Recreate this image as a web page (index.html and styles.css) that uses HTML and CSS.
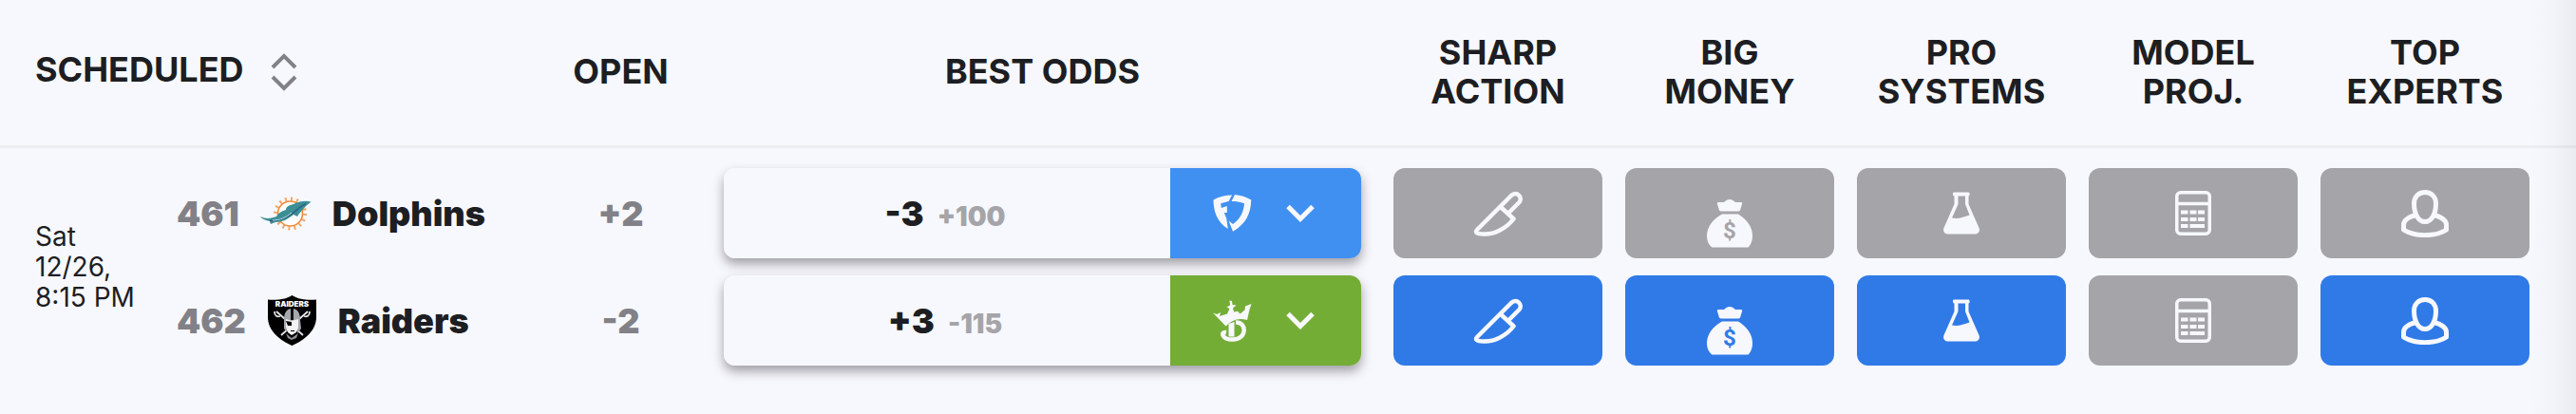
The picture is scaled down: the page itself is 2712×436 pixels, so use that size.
FILE: index.html
```html
<!DOCTYPE html>
<html lang="en">
<head>
    <meta charset="UTF-8">
    <meta name="viewport" content="width=device-width, initial-scale=1.0">
    <title>NFL Odds</title>
    <link rel="stylesheet" href="styles.css">
</head>
<body>

<!-- icon set -->
<svg class="sprite" aria-hidden="true">
    <symbol id="icon-knife" viewBox="0 0 52 48">
        <path d="M30 18 42.500 29.500C35 39.500 22 46 11 45.500 3 45.500 1.500 43.500 4.500 40.500L40 5C46-.5 52.500 7 48.500 12L36.500 24" fill="none" stroke="currentColor" stroke-width="4.500" stroke-linejoin="round"/>
    </symbol>
    <symbol id="icon-money" viewBox="0 0 48 72">
        <path d="M13 24h5c4-4 8-4 12 0h5c2 0 2.500.5 2 2l-2 6.500q-.5 1-2 1H15q-1.500 0-2-1L11 26c-.5-1.500 0-2 2-2z" fill="currentColor"/>
        <path d="M16 36.500h17C41 41 48 50 48 59c0 6-2 10-4.500 12.500h-38C2 69 0 65 0 59c0-9 7-18 16-22.500z" fill="currentColor"/>
        <text class="bag-sign" x="24" y="62" text-anchor="middle">$</text>
    </symbol>
    <symbol id="icon-flask" viewBox="0 0 38 45">
        <path fill="currentColor" fill-rule="evenodd" d="M11 .5h15.500c1.500 0 1.500 4 0 4V13L37.500 38c1.500 4-1 6.500-4 6.500h-29c-3 0-5.500-2.500-4-6.500L11.500 13V4.500c-2 0-2-4-.5-4zM15.500 4.500V13L9 27.500c7 1.500 12-1 18.500-3L23 13V4.500z"/>
    </symbol>
    <symbol id="icon-calc" viewBox="0 0 38 47">
        <g fill="none" stroke="currentColor" stroke-width="3.500">
            <rect x="1.750" y="1.750" width="34.500" height="43.500" rx="4"/>
            <path d="M2 13.500h34"/>
        </g>
        <path fill="currentColor" d="M6 20.500h7.500v4H6zm9.500 0h7v4h-7zm8.500 0h7v4h-7zM6 28h7.500v4H6zm9.500 0h7v4h-7zm8.500 0h7v4h-7zM6 35h7.500v4H6zm9.500 0H31v4H15.500z"/>
    </symbol>
    <symbol id="icon-user" viewBox="0 0 50 50">
        <g fill="none" stroke="currentColor" stroke-width="5" stroke-linejoin="round">
            <path d="M25 2.500c-7 0-11.500 5-11.500 12C13.500 25 18 33.500 25 33.500S36.500 25 36.500 14.500C36.500 7.500 32 2.500 25 2.500z"/>
            <path d="M15.500 26.500C8 28.500 2.500 32 2.500 37v5c11 7.500 34 7.500 45 0v-5c0-5-5.500-8.500-13-10.500"/>
        </g>
    </symbol>
    <symbol id="icon-chevron" viewBox="0 0 30 19">
        <path d="M2 2.500 15 15.500 28 2.500" fill="none" stroke="currentColor" stroke-width="5"/>
    </symbol>
    <symbol id="icon-sort" viewBox="0 0 28 40">
        <path d="M2 15 14 3l12 12M2 25l12 12 12-12" fill="none" stroke="currentColor" stroke-width="4"/>
    </symbol>
    <symbol id="logo-fanduel" viewBox="0 0 40 44">
        <g fill="currentColor" transform="translate(0 2)">
            <path d="M0 5.500Q9 .5 19.500.5L16 7 7.700 9.300 8.300 14l6-2V19h-3l2.400 6L15.300 36C4 29 0 18 0 5.500z"/>
            <path d="M22.500 0Q32 .8 39.700 5.500C39.500 20 34 31 20.500 38.700L16 27.500l4.500 3.500C28 26 32 18 32.500 9.300 28 7.500 24 7 19 7z"/>
        </g>
    </symbol>
    <symbol id="logo-draftkings" viewBox="0 0 41 44">
        <g fill="currentColor">
            <path d="M0 13.500 4 15l4-2-1 4 8-2.500 2.500-5.500-3-1.500 3.500-2L17.500.5l2.500.5.5 4 4 .5-3.500 3 1 4 4-.8 2.500 2.800 5-4 .5-4 6.500-2.500-2 6L36 21q-13-4-22.500 6.500z"/>
            <path d="M16.500 25l6-2v15.500h-6z"/>
        </g>
        <path d="M24 23.500C36 23 36 41.500 21 41.500 10 42 7 33 14 34" fill="none" stroke="currentColor" stroke-width="4.500"/>
    </symbol>
</svg>

<main class="odds-board">
    <table class="odds-table">
        <colgroup>
            <col class="col-date">
            <col class="col-team">
            <col class="col-open">
            <col class="col-odds">
            <col class="col-signal" span="4">
            <col class="col-signal-last">
        </colgroup>
        <thead>
            <tr>
                <th class="head-scheduled" colspan="2" scope="col">
                    <button class="sort-btn" type="button">SCHEDULED<svg class="icon-sort" aria-hidden="true"><use href="#icon-sort"/></svg></button>
                </th>
                <th scope="col">OPEN</th>
                <th scope="col">BEST ODDS</th>
                <th scope="col">SHARP<br>ACTION</th>
                <th scope="col">BIG<br>MONEY</th>
                <th scope="col">PRO<br>SYSTEMS</th>
                <th scope="col">MODEL<br>PROJ.</th>
                <th scope="col">TOP<br>EXPERTS</th>
            </tr>
        </thead>
        <tbody>
            <tr>
                <td class="game-date" rowspan="2">Sat<br>12/26,<br>8:15 PM</td>
                <td>
                    <div class="team">
                        <span class="rotation">461</span>
                        <svg class="logo-dolphins" viewBox="0 0 54 36" aria-hidden="true">
                            <circle cx="31.500" cy="18" r="15" fill="none" stroke="#f3a25f" stroke-width="5" stroke-dasharray="1.800 4.100"/>
                            <circle cx="31.500" cy="18" r="13" fill="#fff" stroke="#f08c3c" stroke-width="1.600"/>
                            <path d="M0 21c6 3 12 2 17 0 2-4 6-6 10-7 0-3 3-5 8-6 6-3 13-4 18.500-2.500L48 10c-3 4-7 7-9 11l-4-2c-6 5-12 8-19 8l-5 2-1-3C6 25 2 24 0 21z" fill="#3c8f95"/>
                            <path d="M10 25.500c9 .5 18-3 25-8.500 5-4 8-8 13-9" fill="none" stroke="#2a5f86" stroke-width="1.500"/>
                            <path d="M13 25c8 0 14-3 20-8" fill="none" stroke="#b9dfe2" stroke-width="1"/>
                        </svg>
                        <span class="team-name">Dolphins</span>
                    </div>
                </td>
                <td class="open-line">+2</td>
                <td class="odds-cell">
                    <div class="odds">
                        <button class="odds-price" type="button"><span class="line">-3</span><span class="juice">+100</span></button>
                        <button class="odds-book fanduel" type="button" aria-label="FanDuel">
                            <svg class="book-logo"><use href="#logo-fanduel"/></svg>
                            <svg class="icon-chevron"><use href="#icon-chevron"/></svg>
                        </button>
                    </div>
                </td>
                <td><button class="signal" type="button" aria-label="Sharp action"><svg class="icon-knife"><use href="#icon-knife"/></svg></button></td>
                <td><button class="signal" type="button" aria-label="Big money"><svg class="icon-money"><use href="#icon-money"/></svg></button></td>
                <td><button class="signal" type="button" aria-label="Pro systems"><svg class="icon-flask"><use href="#icon-flask"/></svg></button></td>
                <td><button class="signal" type="button" aria-label="Model projection"><svg class="icon-calc"><use href="#icon-calc"/></svg></button></td>
                <td><button class="signal" type="button" aria-label="Top experts"><svg class="icon-user"><use href="#icon-user"/></svg></button></td>
            </tr>
            <tr>
                <td>
                    <div class="team">
                        <span class="rotation">462</span>
                        <svg class="logo-raiders" viewBox="0 0 53 55" aria-hidden="true">
                            <path d="M26.500 1C19 6 9 6 1 5.500V24c0 14 12 24 25.500 30C40 48 52 38 52 24V5.500C44 6 34 6 26.500 1z" fill="#000"/>
                            <text class="shield-text" x="26.500" y="13" text-anchor="middle">RAIDERS</text>
                            <g fill="none" stroke="#e4e4e6" stroke-width="1.800">
                                <path d="M10 18l28 25M43 18 15 43"/>
                                <path d="M8 18c0 5 3 6 6 5M45 18c0 5-3 6-6 5"/>
                            </g>
                            <path d="M18 27c0-8 3-12 8.500-12S35 19 35 27l1 9-4 5V28H21v12l-3-4z" fill="#a4a8ad"/>
                            <path d="M25 15h3v12h-3z" fill="#111"/>
                            <path d="M20 26l6 2 7-2v9l-2 5-5 3-4-3-2-6z" fill="#f3f3f3"/>
                            <path d="M20 28l6 1v4h-4zM25 38h4v1h-4z" fill="#000"/>
                            <path d="M20 41l6 5 7-5-2 5-5 2-4-2z" fill="#8c9096"/>
                        </svg>
                        <span class="team-name">Raiders</span>
                    </div>
                </td>
                <td class="open-line">-2</td>
                <td class="odds-cell">
                    <div class="odds">
                        <button class="odds-price" type="button"><span class="line">+3</span><span class="juice">-115</span></button>
                        <button class="odds-book draftkings" type="button" aria-label="DraftKings">
                            <svg class="book-logo"><use href="#logo-draftkings"/></svg>
                            <svg class="icon-chevron"><use href="#icon-chevron"/></svg>
                        </button>
                    </div>
                </td>
                <td><button class="signal active" type="button" aria-label="Sharp action"><svg class="icon-knife"><use href="#icon-knife"/></svg></button></td>
                <td><button class="signal active" type="button" aria-label="Big money"><svg class="icon-money"><use href="#icon-money"/></svg></button></td>
                <td><button class="signal active" type="button" aria-label="Pro systems"><svg class="icon-flask"><use href="#icon-flask"/></svg></button></td>
                <td><button class="signal" type="button" aria-label="Model projection"><svg class="icon-calc"><use href="#icon-calc"/></svg></button></td>
                <td><button class="signal active" type="button" aria-label="Top experts"><svg class="icon-user"><use href="#icon-user"/></svg></button></td>
            </tr>
        </tbody>
    </table>
</main>

</body>
</html>
```

FILE: styles.css
```css
* {
    box-sizing: border-box;
}

body {
    margin: 0;
    font-family: Inter, "Liberation Sans", sans-serif;
    background-color: #f7f8fd;
    color: #1d1e22;
}

button {
    margin: 0;
    padding: 0;
    border: none;
    background: none;
    color: inherit;
    font: inherit;
    cursor: pointer;
}

svg {
    display: block;
    flex-shrink: 0;
}

.sprite {
    display: none;
}

.odds-board {
    position: relative;
    min-height: 100vh;
}

/* scroll shadow on the right edge */
.odds-board::after {
    content: "";
    position: absolute;
    top: 0;
    right: 0;
    bottom: 0;
    width: 48px;
    background: linear-gradient(to right, rgba(30, 30, 50, 0), rgba(30, 30, 50, 0.02) 50%, rgba(30, 30, 50, 0.06));
    pointer-events: none;
}

.odds-table {
    width: 100%;
    table-layout: fixed;
    border-spacing: 0;
}

.col-date {
    width: 186px;
}

.col-team {
    width: 381px;
}

.col-open {
    width: 173px;
}

.col-signal {
    width: 244px;
}

.col-signal-last {
    width: 281px;
}

th {
    height: 156px;
    padding: 0 12px 2px;
    border-bottom: 3px solid #ecedf1;
    font-size: 36px;
    font-weight: 700;
    line-height: 41px;
}

.head-scheduled {
    padding: 0 0 4px 37px;
    text-align: left;
}

.icon-sort {
    display: inline-block;
    width: 28px;
    height: 40px;
    margin-left: 28px;
    color: #828187;
    vertical-align: middle;
}

td {
    padding: 9px 12px;
}

tbody tr:first-child td {
    padding-top: 21px;
}

tbody tr:last-child td {
    padding-bottom: 21px;
}

tr th:last-child,
tr td:last-child {
    padding-right: 49px;
}

tbody tr:first-child .game-date {
    padding: 0 0 0 37px;
    font-size: 28px;
    line-height: 32px;
}

.team {
    display: flex;
    align-items: center;
    gap: 22px;
    margin-left: -12px;
    font-size: 36px;
    font-weight: 900;
}

.rotation,
.open-line {
    color: #828187;
}

.open-line {
    font-size: 36px;
    font-weight: 900;
    text-align: center;
}

.logo-dolphins {
    width: 54px;
    height: 36px;
}

.logo-raiders {
    width: 53px;
    height: 55px;
}

.shield-text {
    font-size: 8px;
    font-weight: 900;
    fill: #fff;
}

tbody tr .odds-cell {
    padding-left: 22px;
    padding-right: 22px;
}

.odds {
    display: flex;
    height: 95px;
    border-radius: 12px;
    box-shadow: 0 6px 12px rgba(30, 25, 35, 0.4);
}

.odds-price {
    flex: 1;
    padding-right: 4px;
    border-radius: 12px 0 0 12px;
    background-color: #f7f8fd;
    font-weight: 900;
}

.line {
    font-size: 36px;
}

.juice {
    margin-left: 14px;
    font-size: 28px;
    color: #a5a4a9;
}

.odds-book {
    display: flex;
    align-items: center;
    justify-content: center;
    gap: 36px;
    width: 201px;
    padding-right: 4px;
    border-radius: 0 12px 12px 0;
    color: #f7f8fd;
}

.fanduel {
    background-color: #4090f1;
}

.draftkings {
    background-color: #74ad36;
}

.book-logo {
    width: 41px;
    height: 44px;
}

.icon-chevron {
    width: 30px;
    height: 19px;
}

.signal {
    --signal-color: #a5a4a9;
    display: flex;
    align-items: center;
    justify-content: center;
    width: 100%;
    height: 95px;
    border-radius: 12px;
    background-color: var(--signal-color);
    color: #f7f8fd;
}

.signal.active {
    --signal-color: #307ae8;
}

.icon-knife {
    width: 52px;
    height: 48px;
}

.icon-money {
    width: 48px;
    height: 72px;
}

.bag-sign {
    font-family: Roboto, sans-serif;
    font-size: 24px;
    font-weight: 700;
    fill: var(--signal-color);
}

.icon-flask {
    width: 38px;
    height: 45px;
}

.icon-calc {
    width: 38px;
    height: 47px;
}

.icon-user {
    width: 50px;
    height: 50px;
}
```
